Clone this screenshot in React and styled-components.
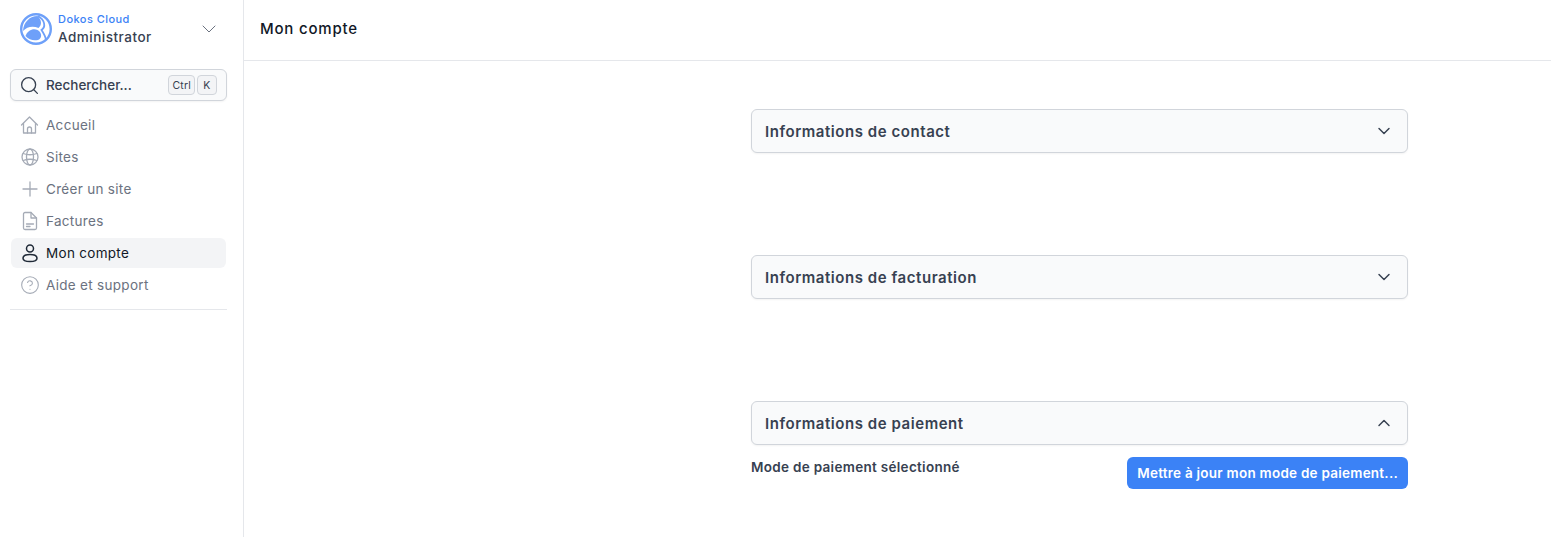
import React from 'react';
import styled, { createGlobalStyle } from 'styled-components';
import { ChevronDown, ChevronUp, Search, CircleHelp } from 'lucide-react';

const GlobalStyle = createGlobalStyle`
  html, body { margin: 0; padding: 0; background: #fff; }
  body { font-family: Inter, "Liberation Sans", sans-serif; color: #111827; }
  * { box-sizing: border-box; }
`;

const Layout = styled.div`
  display: flex;
  width: 1551px;
  height: 537px;
  overflow: hidden;
`;

const Sidebar = styled.aside`
  width: 244px;
  flex: none;
  border-right: 1px solid #e5e7eb;
  padding: 0 16px 0 10px;
  display: flex;
  flex-direction: column;
`;

const OrgSwitcher = styled.div`
  height: 61px;
  padding: 0 6px 3px 10px;
  display: flex;
  align-items: center;
  gap: 6px;
`;

const OrgText = styled.div`
  flex: 1;
  padding-bottom: 1px;
  display: flex;
  flex-direction: column;
  gap: 2px;
`;

const OrgName = styled.div`
  font-size: 11px;
  line-height: 14px;
  font-weight: 500;
  color: #3b82f6;
  letter-spacing: 0.45px;
`;

const OrgRole = styled.div`
  font-size: 13.5px;
  line-height: 18px;
  font-weight: 500;
  color: #374151;
  letter-spacing: 0.5px;
`;

const SearchBox = styled.div`
  height: 32px;
  margin-top: 8px;
  width: 217px;
  padding: 0 9px 0 8px;
  display: flex;
  align-items: center;
  gap: 6px;
  background: #f9fafb;
  border: 1px solid #d1d5db;
  border-radius: 6px;
  box-shadow: 0 1px 2px rgba(0, 0, 0, 0.05);
  color: #374151;
  font-size: 13.5px;
  font-weight: 500;
`;

const SearchLabel = styled.span`
  flex: 1;
`;

const Keys = styled.div`
  display: flex;
  gap: 2px;
`;

const Key = styled.kbd`
  height: 20px;
  min-width: 20px;
  padding: 0 3px;
  display: flex;
  align-items: center;
  justify-content: center;
  font-family: inherit;
  font-size: 10.5px;
  font-weight: 400;
  color: #374151;
  background: #f3f4f6;
  border: 1px solid #d1d5db;
  border-radius: 4px;
  letter-spacing: 0.2px;
`;

const NavList = styled.nav`
  width: 217px;
  margin-top: 9px;
  padding: 0 1px 9px;
  border-bottom: 1px solid #e5e7eb;
  display: flex;
  flex-direction: column;
  gap: 2px;
`;

const NavItem = styled.a`
  height: 30px;
  padding: 0 9px;
  display: flex;
  align-items: center;
  gap: 6px;
  border-radius: 6px;
  font-size: 13.5px;
  letter-spacing: 0.3px;
  color: ${(p) => (p.$active ? '#111827' : '#6b7280')};
  background: ${(p) => (p.$active ? '#f3f4f6' : 'transparent')};
  svg {
    flex: none;
    color: ${(p) => (p.$active ? '#1f2937' : '#a5abb6')};
  }
`;

const Main = styled.main`
  flex: 1;
  display: flex;
  flex-direction: column;
`;

const TopBar = styled.header`
  height: 61px;
  flex: none;
  padding: 0 16px 4px;
  display: flex;
  align-items: center;
  border-bottom: 1px solid #e5e7eb;
  font-size: 15px;
  font-weight: 500;
  color: #111827;
  letter-spacing: 0.8px;
`;

const Content = styled.div`
  width: 657px;
  margin: 48px 0 0 507px;
  display: flex;
  flex-direction: column;
`;

const Section = styled.section`
  min-height: 146px;
`;

const SectionHeader = styled.div`
  height: 44px;
  padding: 0 13px;
  display: flex;
  align-items: center;
  justify-content: space-between;
  background: #f9fafb;
  border: 1px solid #d1d5db;
  border-radius: 6px;
  box-shadow: 0 1px 2px rgba(0, 0, 0, 0.05);
  font-size: 15px;
  font-weight: 600;
  color: #374151;
  letter-spacing: 0.55px;
  svg {
    color: #374151;
  }
`;

const SectionBody = styled.div`
  display: flex;
  justify-content: space-between;
  align-items: flex-start;
  padding-top: 12px;
`;

const BodyLabel = styled.div`
  font-size: 13.5px;
  line-height: 20px;
  font-weight: 600;
  color: #374151;
  letter-spacing: 0.3px;
`;

const PrimaryButton = styled.button`
  height: 32px;
  padding: 0 10px;
  border: 0;
  border-radius: 6px;
  background: #3b82f6;
  color: #fff;
  font-family: inherit;
  font-size: 13.5px;
  font-weight: 600;
  letter-spacing: 0.24px;
`;

const Logo = () => (
  <svg width="32" height="32" viewBox="0 0 32 32" fill="none">
    <circle cx="16" cy="16" r="14.800" fill="#fff" stroke="#6ea0f9" strokeWidth="2.400" />
    <path d="M3 18C3.500 9 10 3 17.500 3C22 7 22 12 18.500 15C13 12.500 7 13.500 3 18Z" fill="#6ea0f9" />
    <path d="M18 3C25 7 26 14 21.500 17C23.500 20 25.500 23 26 27" stroke="#6ea0f9" strokeWidth="1.800" />
    <path d="M5.500 23C7.500 17.500 13 15 17.500 17C22 19 22.500 25.500 18 27C13.500 28 9 27 5.500 23Z" fill="#6ea0f9" />
  </svg>
);

const NavIcon = styled.svg.attrs({ width: 20, height: 20, viewBox: '0 0 20 20', fill: 'none', stroke: 'currentColor', strokeLinejoin: 'round', strokeLinecap: 'round' })`
  stroke-width: ${(p) => p.$weight || 1.3};
`;

const HomeIcon = () => (
  <NavIcon>
    <path d="M1.500 10L9.500 2L17.500 10" />
    <path d="M3.500 8.500V18H15.500V8.500" />
    <path d="M7.500 18V14A2 2 0 0 1 11.500 14V18" />
  </NavIcon>
);

const GlobeIcon = () => (
  <NavIcon>
    <circle cx="10" cy="10" r="8" />
    <ellipse cx="10" cy="10" rx="3.500" ry="8" />
    <path d="M3.200 6.500Q10 9 16.800 6.500M3.200 13.500Q10 11 16.800 13.500" />
  </NavIcon>
);

const PlusIcon = () => (
  <NavIcon>
    <path d="M3 10H17M10 3V17" />
  </NavIcon>
);

const InvoiceIcon = () => (
  <NavIcon>
    <path d="M5 1.500h6L16.500 7v10a1.500 1.500 0 0 1-1.500 1.500H5A1.500 1.500 0 0 1 3.500 17V3A1.500 1.500 0 0 1 5 1.500Z" />
    <path d="M11 1.500V7h5.500M6.500 13h7M6.500 15.500h3.500" />
  </NavIcon>
);

const PersonIcon = () => (
  <NavIcon $weight={1.5}>
    <circle cx="10" cy="5.500" r="3.500" />
    <path d="M3 15.200C3 12.800 6 11.500 10 11.500C14 11.500 17 12.800 17 15.200C17 17.500 14 18.500 10 18.500C6 18.500 3 17.500 3 15.200Z" />
  </NavIcon>
);

const navItems = [
  { label: 'Accueil', icon: <HomeIcon /> },
  { label: 'Sites', icon: <GlobeIcon /> },
  { label: 'Créer un site', icon: <PlusIcon /> },
  { label: 'Factures', icon: <InvoiceIcon /> },
  { label: 'Mon compte', icon: <PersonIcon />, active: true },
  { label: 'Aide et support', icon: <CircleHelp size={20} strokeWidth={1.3} /> },
];

export default function App() {
  return (
    <Layout>
      <GlobalStyle />
      <Sidebar>
        <OrgSwitcher>
          <Logo />
          <OrgText>
            <OrgName>Dokos Cloud</OrgName>
            <OrgRole>Administrator</OrgRole>
          </OrgText>
          <ChevronDown size={24} strokeWidth={1} color="#6b7280" />
        </OrgSwitcher>
        <SearchBox>
          <Search size={21} strokeWidth={1.5} />
          <SearchLabel>Rechercher...</SearchLabel>
          <Keys>
            <Key>Ctrl</Key>
            <Key>K</Key>
          </Keys>
        </SearchBox>
        <NavList>
          {navItems.map((item) => (
            <NavItem key={item.label} $active={item.active}>
              {item.icon}
              {item.label}
            </NavItem>
          ))}
        </NavList>
      </Sidebar>
      <Main>
        <TopBar>Mon compte</TopBar>
        <Content>
          <Section>
            <SectionHeader>
              Informations de contact
              <ChevronDown size={20} strokeWidth={1.75} />
            </SectionHeader>
          </Section>
          <Section>
            <SectionHeader>
              Informations de facturation
              <ChevronDown size={20} strokeWidth={1.75} />
            </SectionHeader>
          </Section>
          <Section>
            <SectionHeader>
              Informations de paiement
              <ChevronUp size={20} strokeWidth={1.75} />
            </SectionHeader>
            <SectionBody>
              <BodyLabel>Mode de paiement sélectionné</BodyLabel>
              <PrimaryButton>Mettre à jour mon mode de paiement...</PrimaryButton>
            </SectionBody>
          </Section>
        </Content>
      </Main>
    </Layout>
  );
}
